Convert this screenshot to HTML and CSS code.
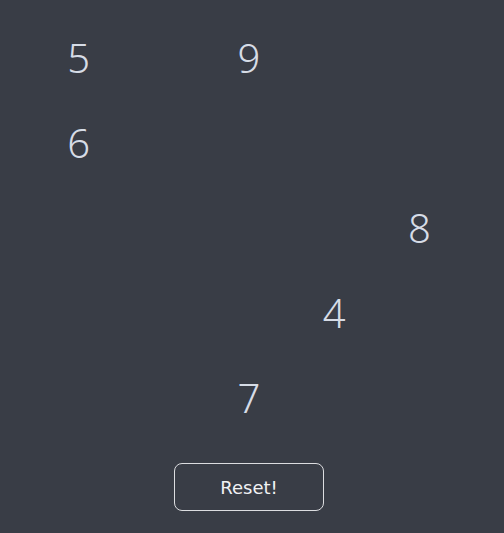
FILE: index.html
```html
<!DOCTYPE html>
<html>
<head>
<meta charset="utf-8">
<link rel="stylesheet" href="styles.css">
</head>
<body>
<main class="app">
  <div class="board">
    <div class="cell">5</div><div class="cell"></div><div class="cell">9</div><div class="cell"></div><div class="cell"></div>
    <div class="cell">6</div><div class="cell"></div><div class="cell"></div><div class="cell"></div><div class="cell"></div>
    <div class="cell"></div><div class="cell"></div><div class="cell"></div><div class="cell"></div><div class="cell">8</div>
    <div class="cell"></div><div class="cell"></div><div class="cell"></div><div class="cell">4</div><div class="cell"></div>
    <div class="cell"></div><div class="cell"></div><div class="cell">7</div><div class="cell"></div><div class="cell"></div>
  </div>
  <button class="reset">Reset!</button>
</main>
</body>
</html>
```
FILE: styles.css
```css
html, body {
  margin: 0;
  padding: 0;
  background: #393d46;
  height: 100%;
}
body {
  font-family: "Noto Sans", "Open Sans", sans-serif;
}
.app {
  width: 426px;
  margin-left: 36px;
  padding-top: 15px;
  display: flex;
  flex-direction: column;
  align-items: center;
}
.board {
  display: grid;
  grid-template-columns: repeat(5, 85.2px);
  grid-template-rows: repeat(5, 85px);
}
.cell {
  display: flex;
  align-items: center;
  justify-content: center;
  color: #d6dce6;
  font-size: 40px;
  font-weight: 300;
  line-height: 1;
}
.reset {
  margin-top: 23px;
  width: 150px;
  height: 48px;
  background: transparent;
  border: 1px solid #dcdde0;
  border-radius: 8px;
  color: #f1f2f4;
  font-family: "DejaVu Sans", "Noto Sans", sans-serif;
  font-size: 18px;
  cursor: pointer;
}
```
